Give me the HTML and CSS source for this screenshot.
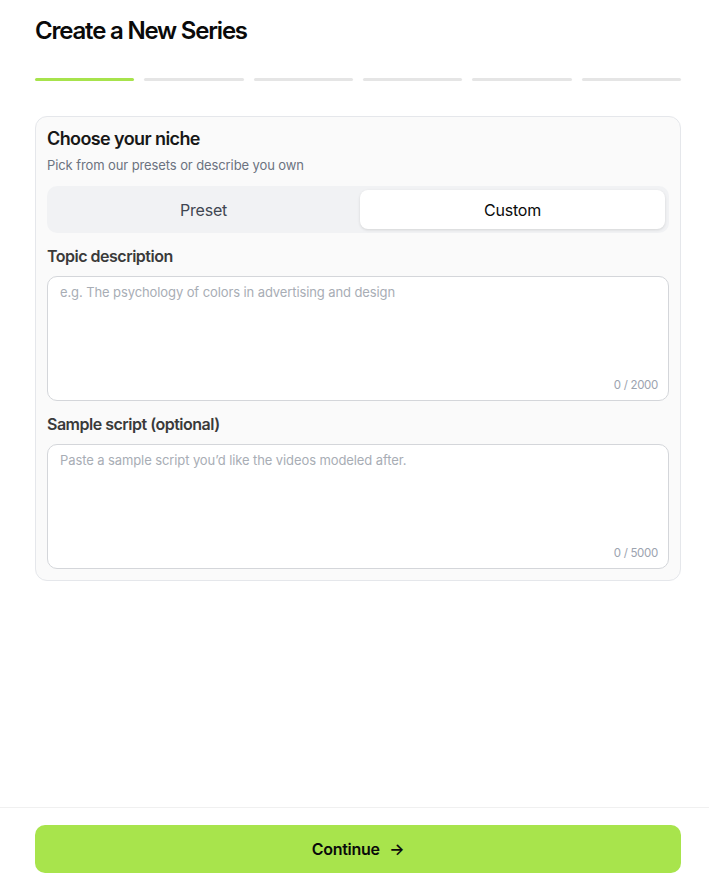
FILE: index.html
```html
<!DOCTYPE html>
<html lang="en">

<head>
    <meta charset="UTF-8">
    <meta name="viewport" content="width=device-width, initial-scale=1.0">
    <title>Create a New Series</title>
    <link rel="stylesheet" href="styles.css">
</head>

<body>
    <main class="pagina">
        <h1>Create a New Series</h1>
        <div class="passos">
            <span class="ativo"></span>
            <span></span>
            <span></span>
            <span></span>
            <span></span>
            <span></span>
        </div>
        <section class="cartao">
            <h2>Choose your niche</h2>
            <p class="sub">Pick from our presets or describe you own</p>
            <div class="abas">
                <button>Preset</button>
                <button class="selecionada">Custom</button>
            </div>
            <label for="topico">Topic description</label>
            <div class="campo">
                <textarea id="topico" placeholder="e.g. The psychology of colors in advertising and design"></textarea>
                <span class="contador">0 / 2000</span>
            </div>
            <label for="roteiro">Sample script (optional)</label>
            <div class="campo">
                <textarea id="roteiro" placeholder="Paste a sample script you’d like the videos modeled after."></textarea>
                <span class="contador">0 / 5000</span>
            </div>
        </section>
    </main>
    <footer class="rodape">
        <button class="continuar">Continue <span class="seta">&rarr;</span></button>
    </footer>
</body>

</html>
```

FILE: styles.css
```css
* {
    box-sizing: border-box;
}

body {
    margin: 0;
    min-height: 100vh;
    display: flex;
    flex-direction: column;
    font-family: Inter, "Noto Sans", sans-serif;
    color: #111;
    background: #fff;
}

.pagina {
    flex: 1;
    padding: 15px 28px 0 35px;
}

h1 {
    margin: 0;
    font-size: 24px;
    line-height: 32px;
    font-weight: 600;
    letter-spacing: -1.2px;
    color: #0a0a0a;
}

.passos {
    display: flex;
    gap: 10px;
    margin-top: 31px;
}

.passos span {
    flex: 1;
    height: 3px;
    border-radius: 2px;
    background: #e5e5e5;
}

.passos span.ativo {
    background: #a7e34c;
}

.cartao {
    margin-top: 35px;
    border: 1px solid #e5e7eb;
    border-radius: 12px;
    background: #fafafa;
    padding: 10px 11px 11px 11px;
}

.cartao h2 {
    margin: 0;
    font-size: 18px;
    line-height: 24px;
    font-weight: 600;
    letter-spacing: -0.6px;
    color: #171717;
}

.sub {
    margin: 4px 0 0;
    font-size: 13px;
    line-height: 20px;
    color: #6b7280;
    letter-spacing: -0.1px;
}

.abas {
    margin-top: 11px;
    display: grid;
    grid-template-columns: 1fr 1fr;
    gap: 4px;
    padding: 4px;
    background: #f1f2f4;
    border-radius: 10px;
}

.abas button {
    height: 39px;
    border: 0;
    border-radius: 8px;
    background: transparent;
    font-family: inherit;
    font-size: 16px;
    color: #404651;
    letter-spacing: -0.2px;
    cursor: pointer;
}

.abas button.selecionada {
    background: #fff;
    color: #0a0a0a;
    box-shadow: 0 1px 3px rgba(0, 0, 0, 0.12);
}

.cartao label {
    display: block;
    margin-top: 11px;
    font-size: 16px;
    line-height: 24px;
    font-weight: 600;
    letter-spacing: -0.5px;
    color: #3a3a3a;
}

.campo {
    position: relative;
    margin-top: 8px;
}

.campo textarea {
    display: block;
    width: 100%;
    height: 125px;
    resize: none;
    border: 1px solid #d4d6da;
    border-radius: 10px;
    background: #fff;
    padding: 6px 12px;
    font-family: inherit;
    font-size: 13px;
    line-height: 18px;
    color: #111;
}

.campo textarea::placeholder {
    color: #a8adb5;
    letter-spacing: -0.1px;
}

.contador {
    position: absolute;
    right: 11px;
    bottom: 9px;
    font-size: 11.5px;
    letter-spacing: -0.3px;
    color: #9ca3af;
}

.rodape {
    border-top: 1px solid #f0f0f0;
    padding: 17px 28px 7px 35px;
}

.continuar {
    width: 100%;
    height: 48px;
    border: 0;
    border-radius: 10px;
    background: #a8e44c;
    font-family: inherit;
    font-size: 16px;
    font-weight: 600;
    letter-spacing: -0.3px;
    color: #0a0a0a;
    cursor: pointer;
}

.seta {
    margin-left: 6px;
}
```
